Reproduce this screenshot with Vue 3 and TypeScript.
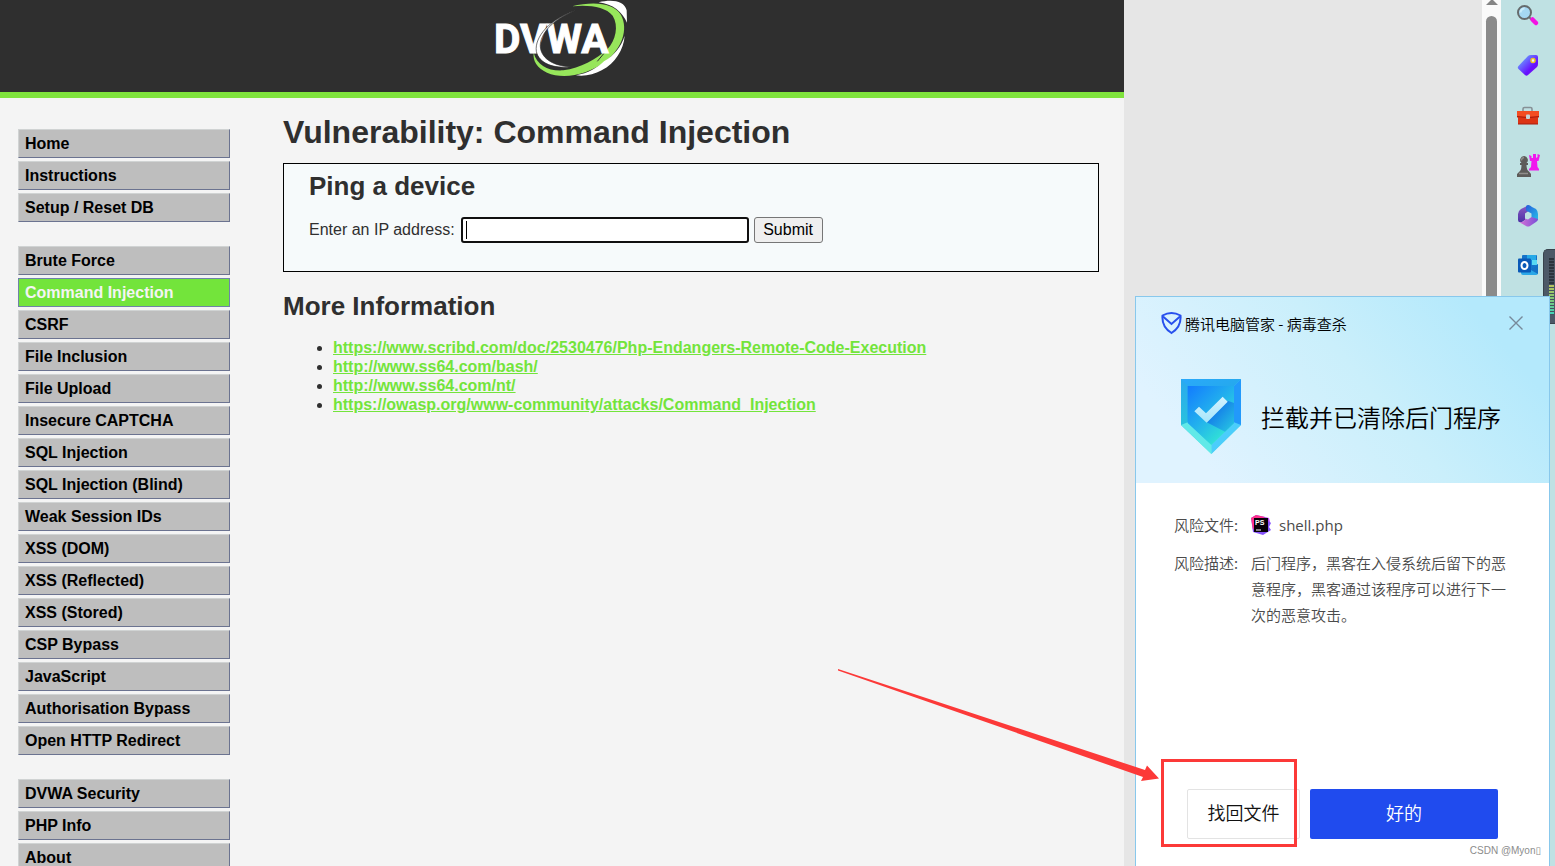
<script setup lang="ts">
interface MenuItem {
  label: string
  active?: boolean
}

const menuGroups: MenuItem[][] = [
  [{ label: 'Home' }, { label: 'Instructions' }, { label: 'Setup / Reset DB' }],
  [
    { label: 'Brute Force' },
    { label: 'Command Injection', active: true },
    { label: 'CSRF' },
    { label: 'File Inclusion' },
    { label: 'File Upload' },
    { label: 'Insecure CAPTCHA' },
    { label: 'SQL Injection' },
    { label: 'SQL Injection (Blind)' },
    { label: 'Weak Session IDs' },
    { label: 'XSS (DOM)' },
    { label: 'XSS (Reflected)' },
    { label: 'XSS (Stored)' },
    { label: 'CSP Bypass' },
    { label: 'JavaScript' },
    { label: 'Authorisation Bypass' },
    { label: 'Open HTTP Redirect' },
  ],
  [{ label: 'DVWA Security' }, { label: 'PHP Info' }, { label: 'About' }],
]

const links: string[] = [
  'https://www.scribd.com/doc/2530476/Php-Endangers-Remote-Code-Execution',
  'http://www.ss64.com/bash/',
  'http://www.ss64.com/nt/',
  'https://owasp.org/www-community/attacks/Command_Injection',
]
</script>

<template>
  <div class="desktop">
    <div class="site">
      <header class="banner">
        <svg class="logo" viewBox="0 0 492 276" role="img" aria-label="DVWA">
          <path d="M276 19C340 4 400 8 423 45C446 88 426 145 377 184C322 226 249 239 201 218C171 203 158 183 161 158C171 196 205 214 250 211C302 205 348 178 382 148C407 121 417 78 398 47C376 21 330 14 276 19Z" fill="#97e65b" />
          <path d="M356 7C397-3 433 3 440 31L441 68C427 36 399 12 356 7Z" fill="#fff" />
          <path d="M434 107C431 149 406 189 365 211C342 224 313 230 288 226C324 220 351 204 372 184C403 165 423 142 434 107Z" fill="#fff" />
          <path d="M352 184L382 148" stroke="#2f2f2f" stroke-width="3" />
          <text x="42" y="158" class="logo-text">DVWA</text>
          <path d="M300 27C235 48 192 85 182 125C174 165 208 198 272 200C222 207 176 190 169 154C163 112 208 54 300 27Z" fill="#fff" stroke="#2f2f2f" stroke-width="2" />
        </svg>
      </header>
      <div class="columns">
        <nav class="menu" aria-label="Main menu">
          <ul v-for="(group, g) in menuGroups" :key="g">
            <li v-for="item in group" :key="item.label">
              <a href="#" :class="{ active: item.active }">{{ item.label }}</a>
            </li>
          </ul>
        </nav>
        <main class="content">
          <h1>Vulnerability: Command Injection</h1>
          <section class="panel">
            <h2>Ping a device</h2>
            <form class="ping" @submit.prevent>
              <label for="ip">Enter an IP address:</label>
              <input id="ip" type="text" name="ip" />
              <button type="submit">Submit</button>
            </form>
          </section>
          <h2 class="more">More Information</h2>
          <ul class="links">
            <li v-for="link in links" :key="link"><a :href="link">{{ link }}</a></li>
          </ul>
        </main>
      </div>
    </div>

    <div class="blank"></div>

    <div class="scrollbar">
      <svg width="12" height="6" viewBox="0 0 12 6" aria-hidden="true"><path d="M0 5L5 0H7L12 5Z" fill="#858585" /></svg>
      <div class="thumb"></div>
    </div>

    <aside class="edge" aria-label="Browser sidebar">
      <button type="button" aria-label="Search">
        <svg viewBox="0 0 24 24">
          <path d="M13 13L16 16" stroke="#777" stroke-width="2" />
          <path d="M16.500 15.500L20 19" stroke="#f312e3" stroke-width="4.500" stroke-linecap="round" />
          <circle cx="8.500" cy="8.500" r="6.500" fill="#a5d8f3" stroke="#656b6d" stroke-width="2" />
          <path d="M4.500 8.500A4 4 0 0 1 8.500 4.500" stroke="#c9edfb" stroke-width="2" fill="none" />
        </svg>
      </button>
      <button type="button" aria-label="Shopping">
        <svg viewBox="0 0 24 24">
          <defs><linearGradient id="tag" x1="0" y1="0" x2="1" y2="1"><stop offset=".2" stop-color="#6a94ff" /><stop offset=".65" stop-color="#6710ff" /><stop offset="1" stop-color="#7f1be0" /></linearGradient></defs>
          <path d="M12 2Q13 1 15 1H20Q22 1 22 3V10Q22 12 21 13L12 21Q10.500 22.500 9 21L2.500 15Q1 13.500 2.500 12Z" fill="url(#tag)" />
          <circle cx="17" cy="6.500" r="2" fill="#efecff" stroke="#efc41e" stroke-width="1.500" />
        </svg>
      </button>
      <button type="button" aria-label="Tools">
        <svg viewBox="0 0 24 24">
          <path d="M7 8V5Q7 3.500 8.500 3.500H14.500Q16 3.500 16 5V8" fill="none" stroke="#879196" stroke-width="1.600" />
          <path d="M1 7H23V13L22 14V20H2V14L1 13Z" fill="#dc3414" />
          <path d="M1 7H23V12.500H1Z" fill="#f34d22" />
          <path d="M1 12.500Q12 15 23 12.500M2 20H22" fill="none" stroke="#a81d0e" stroke-width="1" />
          <rect x="10" y="10.500" width="4" height="4.500" rx="1" fill="#c5d4d8" />
        </svg>
      </button>
      <button type="button" aria-label="Games">
        <svg viewBox="0 0 24 24">
          <path d="M13 1L15.500 2V4H17V0H20V4L21.500 3V0L24 1L22.500 7H21L21.500 13L23 15V16.500H13V15L15 13L15.500 7H14Z" fill="#f017ed" />
          <path d="M8 2A4 4 0 0 1 10.500 9H12V11H10.500Q10.500 16 13 17.500L15 20V23H1V20L3.500 17.500Q5.500 16 5.500 11H4V9H5.500A4 4 0 0 1 8 2Z" fill="#5d5b59" />
          <path d="M8 3.500A3 3 0 0 0 5.500 6.500M3 19.500H12" stroke="#908e8c" stroke-width="1.300" fill="none" />
        </svg>
      </button>
      <button type="button" aria-label="Microsoft 365">
        <svg viewBox="0 0 24 24">
          <defs>
            <linearGradient id="m1" x1="0" y1="0" x2="0" y2="1"><stop stop-color="#8d5bc4" /><stop offset="1" stop-color="#4b31a5" /></linearGradient>
            <linearGradient id="m2" x1="0" y1="0" x2="1" y2="1"><stop stop-color="#245ddc" /><stop offset="1" stop-color="#27bee9" /></linearGradient>
            <linearGradient id="m3" x1="0" y1="0" x2="1" y2="0"><stop stop-color="#da70d6" /><stop offset="1" stop-color="#7750d7" /></linearGradient>
          </defs>
          <path d="M13 1L5 5Q2 7 2 10V16Q2 19 6 18L9 16V9.500L14 6Z" fill="url(#m1)" />
          <path d="M12 1Q14 1 16 3L20 5Q22 7 22 10V16L15.500 13.500V9.500L10 6.500V3Q10 1 12 1Z" fill="url(#m2)" />
          <path d="M15.500 13L22 15Q22 17 20 18L14 22Q12 23 10 22L3 18Q6 19 9 16V14.500L12 15.500Z" fill="url(#m3)" />
        </svg>
      </button>
      <button type="button" aria-label="Outlook">
        <svg viewBox="0 0 24 24">
          <rect x="6" y="1" width="15" height="17" rx="1" fill="#1473ca" />
          <path d="M11 1H20V6H11Z" fill="#26a9e7" /><path d="M11 6H16V11H11Z" fill="#1482d8" /><path d="M16 6H21V11H16Z" fill="#58d8f3" />
          <path d="M5 13L14 16L22 10V19Q22 21 20 21H7Q5 21 5 19Z" fill="#2aa7e7" /><path d="M22 10V20L14 15.500Z" fill="#1370c6" />
          <rect x="2" y="4.500" width="13" height="14" rx="1" fill="#0959b7" />
          <ellipse cx="8.500" cy="11.500" rx="3" ry="3.500" fill="none" stroke="#fff" stroke-width="2" />
        </svg>
      </button>
      <div class="meter"><div class="bars"></div></div>
    </aside>

    <section class="toast" role="dialog" aria-labelledby="toast-title">
      <header class="toast-head">
        <div class="toast-bar">
          <svg width="22" height="24" viewBox="0 0 22 24" aria-hidden="true">
            <path d="M10.500 2Q15 2 19.500 4.500Q20.500 16 10.500 22Q.5 16 1.500 4.500Q6 2 10.500 2Z" fill="none" stroke="#2850ed" stroke-width="2" />
            <path d="M2 5.500L10.500 13L19 5.500" fill="none" stroke="#2850ed" stroke-width="2" />
          </svg>
          <span id="toast-title">腾讯电脑管家 - 病毒查杀</span>
          <button type="button" class="close" aria-label="关闭">
            <svg width="14" height="14" viewBox="0 0 14 14"><path d="M.5.5L13.500 13.500M13.500.5L.5 13.500" stroke="#77899a" stroke-width="1.400" /></svg>
          </button>
        </div>
        <div class="verdict">
          <svg width="60" height="75" viewBox="0 0 180 225" aria-hidden="true">
            <defs>
              <linearGradient id="s1" x1="0" y1="0" x2=".3" y2="1"><stop stop-color="#2aa9fb" /><stop offset=".5" stop-color="#22a9e6" /><stop offset="1" stop-color="#6df0df" /></linearGradient>
              <linearGradient id="s2" x1="0" y1="0" x2=".8" y2="1"><stop stop-color="#127bff" /><stop offset=".5" stop-color="#22b1ed" /><stop offset="1" stop-color="#35efd0" /></linearGradient>
              <linearGradient id="s3" x1="0" y1="0" x2="1" y2="1"><stop offset=".3" stop-color="#147de9" /><stop offset="1" stop-color="#28cbe2" /></linearGradient>
              <linearGradient id="s4" x1="0" y1="0" x2="0" y2="1"><stop stop-color="#d3f2ff" /><stop offset="1" stop-color="#a6e6fb" /></linearGradient>
              <linearGradient id="s5" x1="0" y1="0" x2="0" y2="1"><stop stop-color="#2ba9ee" /><stop offset="1" stop-color="#29c2dd" /></linearGradient>
            </defs>
            <path d="M0 0H180V138L91 225L0 138Z" fill="url(#s1)" />
            <path d="M0 0L20 21V132L0 138Z" fill="url(#s5)" />
            <path d="M180 0V138L91 225V198L159 132V21Z" fill="#4bcdfb" />
            <path d="M180 0V138L159 130V21Z" fill="#2299fb" />
            <path d="M0 138L20 130L91 198V225Z" fill="#61e9e8" />
            <path d="M20 21H159V132L91 198L20 132Z" fill="url(#s2)" />
            <path d="M140 65L159 72V132L132 158L77 130Z" fill="url(#s3)" />
            <path d="M40 97L54 83L75 103L125 53L140 68L77 131Z" fill="url(#s4)" />
          </svg>
          <strong>拦截并已清除后门程序</strong>
        </div>
      </header>
      <div class="toast-body">
        <dl class="details">
          <dt>风险文件:</dt>
          <dd class="file">
            <svg width="20" height="20" viewBox="0 0 20 20" aria-hidden="true">
              <path d="M0 3L5 0L14 2L20 8L18 12L20 15L12 20L2 17Z" fill="#8653fb" />
              <path d="M0 3L5 0L14 2L5 8L2 15Z" fill="#ff318c" />
              <path d="M14 2L18 3L19 7L16 6Z" fill="#c245f8" />
              <rect x="3" y="3" width="14" height="14" fill="#080009" />
              <text x="4" y="10" class="ps">PS</text><path d="M5 15H10" stroke="#fff" />
            </svg>
            shell.php
          </dd>
          <dt>风险描述:</dt>
          <dd>后门程序，黑客在入侵系统后留下的恶意程序，黑客通过该程序可以进行下一次的恶意攻击。</dd>
        </dl>
        <div class="actions">
          <button type="button" class="restore">找回文件</button>
          <button type="button" class="ok">好的</button>
        </div>
        <div class="watermark">CSDN @Myon▯</div>
      </div>
      <svg class="arrow" viewBox="0 0 324 116" aria-hidden="true"><path d="M3 3L310 104L312 99.500L324 112.500L306 115L308 111L3 4.500Z" fill="#fc3938" /></svg>
      <div class="highlight"></div>
    </section>
  </div>
</template>

<style>
body {
  margin: 0;
}
</style>

<style scoped>
* {
  box-sizing: border-box;
}
.desktop {
  position: relative;
  display: grid;
  grid-template-columns: 1124fr 358fr 19px 54px;
  height: 100vh;
  overflow: hidden;
  background: #e6e6e6;
  font-family: "Liberation Sans", Arial, "Noto Sans CJK SC", sans-serif;
  font-size: 16px;
  color: #2f2f2f;
}
ul {
  margin: 0;
  padding: 0;
}
.site {
  min-width: 0;
  background: #f4f4f4;
}
.banner {
  height: 98px;
  display: flex;
  justify-content: center;
  background: #2f2f2f;
  border-bottom: 6px solid #80e33d;
}
.logo {
  width: 164px;
  height: 92px;
}
.logo-text {
  font: 700 122px Roboto, sans-serif;
  fill: #fff;
  stroke: #fff;
  stroke-width: 3px;
}
.columns {
  display: flex;
}
.menu {
  flex: none;
  width: 283px;
  padding: 31px 53px 0 18px;
  display: flex;
  flex-direction: column;
  gap: 24px;
}
.menu ul {
  list-style: none;
  display: flex;
  flex-direction: column;
  gap: 3px;
}
.menu a {
  display: block;
  height: 29px;
  padding: 0 6px;
  border: 1px solid;
  border-color: #d0d3d3 #6b7390 #6b7390 #d0d3d3;
  background: #bebebe;
  color: #000;
  font-weight: bold;
  line-height: 27px;
  text-decoration: none;
  white-space: nowrap;
}
.menu a.active {
  border-color: #6f83a8;
  background: #73e43b;
  color: #f4f4f4;
}
.content {
  flex: 1;
  min-width: 0;
  padding: 15px 25px 0 0;
}
h1 {
  margin: 0 0 12px;
  font-size: 32px;
  line-height: 38px;
}
h2 {
  margin: 0;
  font-size: 26px;
  line-height: 30px;
}
.panel {
  height: 109px;
  padding: 7px 25px 0;
  border: 1px solid #000;
  background: #f6fafb;
}
.ping {
  display: flex;
  align-items: center;
  margin-top: 16px;
}
.ping label {
  margin-right: 6px;
  line-height: 24px;
}
.ping input {
  width: 288px;
  height: 26px;
  margin-right: 5px;
  padding: 2px 3px;
  border: 2px solid #101010;
  border-radius: 3px;
  background: linear-gradient(#000, #000) 3px center / 1px 18px no-repeat #fff;
  font: inherit;
}
.ping button {
  width: 69px;
  height: 26px;
  padding: 0;
  border: 1px solid #767676;
  border-radius: 3px;
  background: #efefef;
  color: #000;
  font: inherit;
}
.more {
  margin-top: 19px;
}
.links {
  margin-top: 17px;
  padding-left: 50px;
  line-height: 19px;
}
.links a {
  color: #73e43b;
  font-weight: bold;
}
.scrollbar {
  display: flex;
  flex-direction: column;
  align-items: center;
  gap: 10px;
  background: #fafafa;
}
.thumb {
  flex: 1;
  width: 11px;
  border-radius: 6px 6px 0 0;
  background: #8b8b8b;
}
.edge {
  position: relative;
  display: flex;
  flex-direction: column;
  align-items: flex-start;
  gap: 26px;
  padding: 4px 0 0 15px;
  background: #bfe1e3;
}
.edge button {
  width: 24px;
  height: 24px;
  padding: 0;
  border: 0;
  background: none;
}
.edge button svg {
  display: block;
}
.meter {
  position: absolute;
  top: 249px;
  right: 0;
  width: 12px;
  height: 75px;
  padding: 8px 1px 8px 5px;
  border: 1px solid #38434d;
  border-right: 0;
  border-radius: 5px 0 0 5px;
  background: #4c5967;
}
.bars {
  height: 100%;
  background:
    repeating-linear-gradient(transparent 0 2px, #46525f 2px 3px),
    linear-gradient(#2b343d 0 27px, #b9c45d 27px, #7cc878 42px, #3fd3bd);
}
.toast {
  position: absolute;
  right: 5px;
  bottom: 0;
  width: 415px;
  height: 570px;
  display: flex;
  flex-direction: column;
  border: 1px solid #88c8ec;
  border-bottom: 0;
  background: #fff;
  font-family: "Noto Sans CJK SC", sans-serif;
  font-size: 15px;
  font-weight: 350;
  color: #4b4b4b;
}
.toast-head {
  height: 186px;
  padding: 14px 26px 0 25px;
  background: linear-gradient(50deg, #e0f3ff 15%, #caeffb 55%, #b4e9fc 85%);
  color: #000;
}
.toast-bar {
  display: flex;
  align-items: center;
  gap: 2px;
  height: 24px;
}
.close {
  display: flex;
  margin-left: auto;
  padding: 0;
  border: 0;
  background: none;
}
.verdict {
  display: flex;
  align-items: center;
  gap: 20px;
  margin: 44px 0 0 20px;
}
.verdict strong {
  font-size: 24px;
  font-weight: inherit;
  line-height: 36px;
  white-space: nowrap;
}
.toast-body {
  flex: 1;
  display: flex;
  flex-direction: column;
  padding: 29px 0 7px;
}
.details {
  display: grid;
  grid-template-columns: 77px 256px;
  row-gap: 12px;
  margin: 0 0 0 38px;
  line-height: 26px;
}
.details dd {
  margin: 0;
}
.file {
  display: flex;
  align-items: center;
  gap: 8px;
  font-family: "Open Sans", sans-serif;
  font-weight: 400;
}
.ps {
  font: bold 7px "Liberation Sans", sans-serif;
  fill: #fff;
}
.actions {
  display: flex;
  gap: 10px;
  margin: auto 51px 4px;
}
.actions button {
  height: 50px;
  padding: 0 0 4px;
  border-radius: 2px;
  font: inherit;
  font-size: 18px;
}
.restore {
  width: 113px;
  border: 1px solid #e3e3e3;
  background: #fff;
  color: #111;
}
.ok {
  flex: 1;
  border: 0;
  background: #204bee;
  color: #fff;
}
.watermark {
  align-self: flex-end;
  padding-right: 8px;
  font: 10px/16px "Liberation Sans", "DejaVu Sans", sans-serif;
  color: #8c8c8c;
}
.arrow {
  position: absolute;
  right: 390px;
  bottom: 84px;
  width: 324px;
  height: 116px;
}
.highlight {
  position: absolute;
  left: 25px;
  bottom: 19px;
  width: 136px;
  height: 88px;
  border: 3px solid #fc3938;
  pointer-events: none;
}
</style>
